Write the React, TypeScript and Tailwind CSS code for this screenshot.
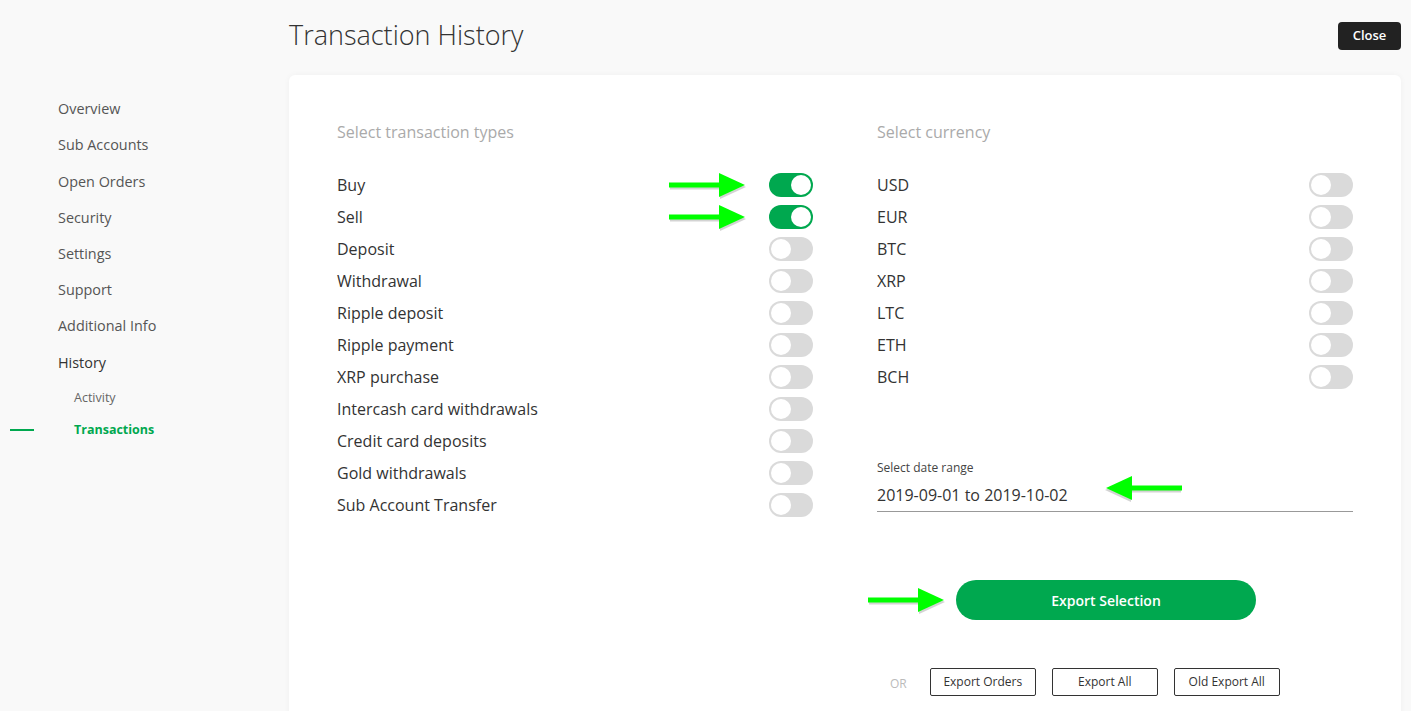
import React, { useState } from 'react'

const navItems = ['Overview', 'Sub Accounts', 'Open Orders', 'Security', 'Settings', 'Support', 'Additional Info']

const txTypes = [
  'Buy',
  'Sell',
  'Deposit',
  'Withdrawal',
  'Ripple deposit',
  'Ripple payment',
  'XRP purchase',
  'Intercash card withdrawals',
  'Credit card deposits',
  'Gold withdrawals',
  'Sub Account Transfer',
]

const currencies = ['USD', 'EUR', 'BTC', 'XRP', 'LTC', 'ETH', 'BCH']

const Toggle: React.FC<{ on: boolean; onClick: () => void }> = ({ on, onClick }) => (
  <button
    onClick={onClick}
    className={`relative h-[24px] w-[44px] rounded-full transition-colors ${on ? 'bg-[#00a84f]' : 'bg-[#dadada]'}`}
  >
    <span
      className={`absolute top-[2px] h-[20px] w-[20px] rounded-full bg-white transition-all ${on ? 'left-[22px]' : 'left-[2px]'}`}
    />
  </button>
)

// green annotation arrow from the screenshot
const Arrow: React.FC<{ className: string; flip?: boolean }> = ({ className, flip }) => (
  <svg
    className={`pointer-events-none absolute ${className}`}
    width="80"
    height="30"
    viewBox="0 0 80 30"
    style={flip ? { transform: 'scaleX(-1)' } : undefined}
  >
    <g opacity="0.25" transform="translate(1,2)">
      <rect x="1" y="12.5" width="52" height="5" fill="#555" />
      <polygon points="51,3 77,15 51,27" fill="#555" />
    </g>
    <rect x="1" y="12.5" width="52" height="5" fill="#00ff00" />
    <polygon points="51,3 77,15 51,27" fill="#00ff00" />
  </svg>
)

const App: React.FC = () => {
  const [types, setTypes] = useState<boolean[]>(txTypes.map((_, i) => i < 2))
  const [curr, setCurr] = useState<boolean[]>(currencies.map(() => false))

  return (
    <div className="relative flex min-h-[711px] bg-[#f9f9f9] font-['Open_Sans',sans-serif] text-[#333]">
      <aside className="w-[289px] shrink-0 pt-[91px]">
        <nav className="flex flex-col">
          {navItems.map((n) => (
            <a key={n} className="flex h-[36.2px] items-center pl-[58px] text-[14.4px] text-[#555]">
              {n}
            </a>
          ))}
          <a className="flex h-[37px] items-center pl-[58px] text-[14.4px] text-[#333]">History</a>
          <a className="flex h-[34px] items-center pl-[74px] text-[12.5px] text-[#666]">Activity</a>
          <div className="flex h-[30px] items-center">
            <span className="ml-[10px] h-[2px] w-[24px] bg-[#00a84f]" />
            <a className="ml-[40px] text-[12.5px] font-bold text-[#00a84f]">Transactions</a>
          </div>
        </nav>
      </aside>

      <main className="flex-1 pr-[10px]">
        <div className="flex items-start justify-between pt-[17px]">
          <h1 className="text-[27px] font-light leading-[36px] text-[#333]">Transaction History</h1>
          <button className="mt-[5px] h-[28px] w-[63px] rounded-[4px] bg-[#222] text-[13px] font-semibold text-white">
            Close
          </button>
        </div>

        <section className="mt-[22px] rounded-[6px] bg-white px-[48px] pb-[40px] pt-[46px] shadow-[0_0_6px_rgba(0,0,0,0.04)]">
          <div className="grid grid-cols-2 gap-[64px]">
            <div>
              <h2 className="text-[16px] leading-[22px] text-[#aaa]">Select transaction types</h2>
              <ul className="mt-[26px]">
                {txTypes.map((t, i) => (
                  <li key={t} className="flex h-[32px] items-center justify-between text-[16px]">
                    <span>{t}</span>
                    <Toggle
                      on={types[i]}
                      onClick={() => setTypes(types.map((v, j) => (j === i ? !v : v)))}
                    />
                  </li>
                ))}
              </ul>
            </div>

            <div>
              <h2 className="text-[16px] leading-[22px] text-[#aaa]">Select currency</h2>
              <ul className="mt-[26px]">
                {currencies.map((c, i) => (
                  <li key={c} className="flex h-[32px] items-center justify-between text-[16px]">
                    <span>{c}</span>
                    <Toggle
                      on={curr[i]}
                      onClick={() => setCurr(curr.map((v, j) => (j === i ? !v : v)))}
                    />
                  </li>
                ))}
              </ul>

              <div className="mt-[66px]">
                <label className="block text-[12px] leading-[17px] text-[#444]">Select date range</label>
                <div className="mt-[8px] border-b border-[#999] pb-[5px] text-[16px] leading-[22px] text-[#333]">
                  2019-09-01 to 2019-10-02
                </div>
              </div>

              <button className="ml-[79px] mt-[68px] h-[40px] w-[300px] rounded-full bg-[#00a84f] text-[14px] font-semibold text-white">
                Export Selection
              </button>

              <div className="mt-[48px] flex items-center gap-[16px] pl-[13px]">
                <span className="mr-[7px] mt-[4px] text-[12px] text-[#bbb]">OR</span>
                {['Export Orders', 'Export All', 'Old Export All'].map((b) => (
                  <button
                    key={b}
                    className="h-[28px] w-[106px] rounded-[2px] border border-[#333] text-[12px] text-[#333]"
                  >
                    {b}
                  </button>
                ))}
              </div>
            </div>
          </div>
        </section>
      </main>

      <Arrow className="left-[668px] top-[170px]" />
      <Arrow className="left-[668px] top-[202px]" />
      <Arrow className="left-[1103px] top-[473px]" flip />
      <Arrow className="left-[867px] top-[585px]" />
    </div>
  )
}

export default App
